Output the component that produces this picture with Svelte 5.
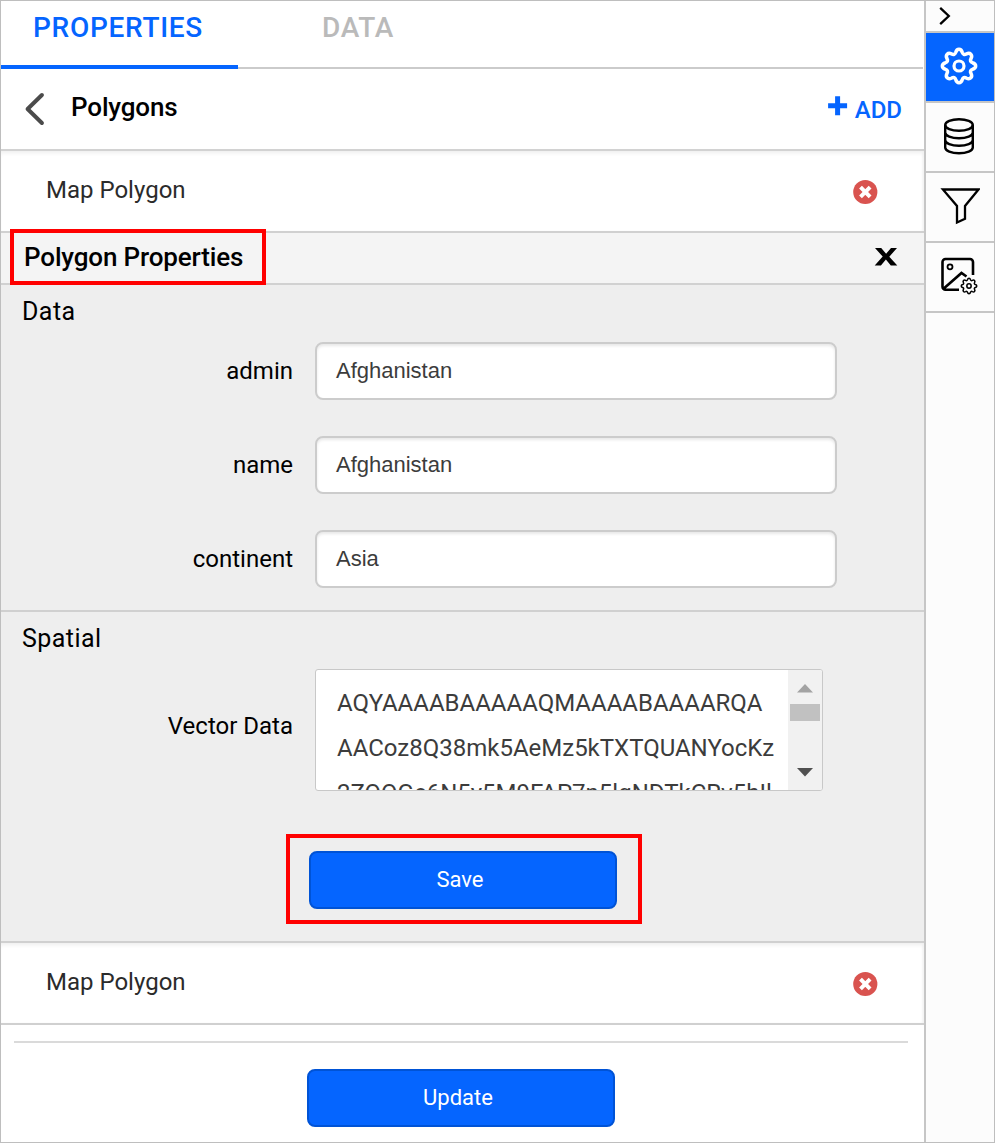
<script>
  const fields = [
    { label: 'admin', value: 'Afghanistan' },
    { label: 'name', value: 'Afghanistan' },
    { label: 'continent', value: 'Asia' }
  ];
  const vector = ['AQYAAAABAAAAAQMAAAABAAAARQA', 'AACoz8Q38mk5AeMz5kTXTQUANYocKz', '2ZQQGe6N5y5M9FAP7n5lgNDTkCRv5hIl'];
  const gear = 'M-3.2-13.1C-2-17.2 2-17.2 3.2-13.1C3.9-11.2 5.4-10.6 7-11.6C10.8-13.6 13.6-10.8 11.6-7C10.6-5.4 11.2-3.9 13.1-3.2C17.2-2 17.2 2 13.1 3.2C11.2 3.9 10.6 5.4 11.6 7C13.6 10.8 10.8 13.6 7 11.6C5.4 10.6 3.9 11.2 3.2 13.1C2 17.2-2 17.2-3.2 13.1C-3.9 11.2-5.4 10.6-7 11.6C-10.8 13.6-13.6 10.8-11.6 7C-10.6 5.4-11.2 3.9-13.1 3.2C-17.2 2-17.2-2-13.1-3.2C-11.2-3.9-10.6-5.4-11.6-7C-13.6-10.8-10.8-13.6-7-11.6C-5.4-10.6-3.9-11.2-3.2-13.1Z';
</script>

{#snippet polygonRow()}
  <div class="row">
    <span class="t24 map">Map Polygon</span>
    <svg class="remove" width="26" height="26" viewBox="0 0 26 26">
      <circle cx="13.3" cy="13" r="12.1" fill="#d9534f" />
      <path d="M8.5 8.2l9.6 9.6M18.1 8.2l-9.6 9.6" stroke="#fff" stroke-width="4" />
    </svg>
  </div>
{/snippet}

<div class="app">
  <main>
    <nav class="tabs">
      <div class="tab active"><span>PROPERTIES</span></div>
      <div class="tab"><span>DATA</span></div>
    </nav>
    <header>
      <svg class="back" width="22" height="34" viewBox="0 0 22 34" fill="none" stroke="#4b4b4b" stroke-width="4" stroke-linecap="round" stroke-linejoin="round"><path d="M17.9 3L3.6 17 17.9 31" /></svg>
      <h1>Polygons</h1>
      <div class="add">
        <svg width="20" height="20" viewBox="0 0 20 20" stroke="#0565ff" stroke-width="5"><path d="M9.6 .3v19M.1 9.8h19" /></svg>
        <span>ADD</span>
      </div>
    </header>
    {@render polygonRow()}
    <div class="heading">
      <div class="mark title"><h2>Polygon Properties</h2></div>
      <svg class="close" width="24" height="20" viewBox="0 0 24 20" fill="#000"><path d="M1 1h6.2l4.9 5.8L17 1h6l-7.7 8.7 8 8.7h-6.5l-4.9-5.8-5 5.8H.7l8-8.8z" /></svg>
    </div>
    <section class="data">
      <h3>Data</h3>
      {#each fields as f}
        <div class="field">
          <span class="t24 label">{f.label}</span>
          <div class="input">{f.value}</div>
        </div>
      {/each}
    </section>
    <section class="spatial">
      <h3>Spatial</h3>
      <div class="field vec">
        <span class="t24 label">Vector Data</span>
        <div class="area">
          <div class="lines">
            {#each vector as line}<div>{line}</div>{/each}
          </div>
          <div class="scroll">
            <svg width="18" height="9"><path d="M1 8.5L9 0 17 8.5z" fill="#a3a3a3" /></svg>
            <div class="thumb"></div>
            <svg class="down" width="18" height="9"><path d="M1 0h16L9 8.5z" fill="#505050" /></svg>
          </div>
        </div>
      </div>
      <div class="mark savebox"><div class="btn">Save</div></div>
    </section>
    {@render polygonRow()}
    <footer><div class="btn">Update</div></footer>
  </main>
  <aside>
    <div class="cell top">
      <svg width="14" height="20" viewBox="0 0 14 20" fill="none" stroke="#000" stroke-width="2.3"><path d="M2.2 1.8L10.8 10 2.2 18.2" /></svg>
    </div>
    <div class="cell on">
      <svg width="38" height="38" viewBox="-19 -19 38 38" fill="none" stroke="#fff" stroke-linejoin="round">
        <circle r="5" stroke-width="3.2" />
        <path transform="scale(1.03)" stroke-width="3.4" d={gear} />
      </svg>
    </div>
    <div class="cell">
      <svg width="32" height="38" viewBox="0 0 32 38" fill="none" stroke="#000" stroke-width="2.4">
        <ellipse cx="16" cy="8" rx="13.8" ry="5.8" />
        <path d="M2.2 8v22.500c0 3.200 6.200 5.800 13.800 5.800s13.800-2.600 13.800-5.800V8M2.200 15.500c0 3.200 6.200 5.800 13.800 5.800s13.800-2.600 13.800-5.800M2.200 23c0 3.200 6.200 5.800 13.800 5.800s13.800-2.600 13.800-5.800" />
      </svg>
    </div>
    <div class="cell">
      <svg class="funnel" width="40" height="38" viewBox="0 0 40 38" fill="none" stroke="#000" stroke-width="2.3"><path d="M2.9 2.5H38.5L25 19v12.8l-8 3.7V19z" /></svg>
    </div>
    <div class="cell">
      <svg width="38" height="38" viewBox="0 1 38 38" fill="none" stroke="#000">
        <path d="M19 33.800H5.500a3 3 0 0 1-3-3V6a3 3 0 0 1 3-3H30a3 3 0 0 1 3 3v13M3.500 32.800L21.500 17l5 3.500" stroke-width="2.600" />
        <circle cx="10" cy="10.800" r="2.500" stroke-width="1.800" />
        <g transform="translate(29 30) scale(.48)" stroke-width="3.200"><circle r="4.500" /><path d={gear} /></g>
      </svg>
    </div>
  </aside>
</div>

<style>
  :global(body) { margin: 0; background: #fff; }
  :global(*) { box-sizing: border-box; }
  .app { display: flex; width: 995px; height: 1143px; border: 1px solid #bebebe; font-family: Roboto, sans-serif; color: #000; overflow: hidden; }
  main { width: 923px; display: flex; flex-direction: column; }
  svg { display: block; flex: none; }
  h1, h2, h3 { margin: 0; font-weight: 500; font-size: 26px; line-height: 30px; letter-spacing: -.15px; }
  h3 { font-weight: 400; font-size: 25px; letter-spacing: .45px; padding-left: 21px; }
  .tabs { display: flex; height: 68px; width: 922px; background: linear-gradient(#cbcbcb, #cbcbcb) bottom / 100% 2px no-repeat; }
  .tab { width: 237px; display: flex; justify-content: center; padding: 10px 0 0 3px; font-size: 28px; line-height: 33px; font-weight: 500; color: #bababa; letter-spacing: .7px; }
  .active { color: #0565ff; border-bottom: 4px solid #0565ff; padding: 10px 3px 0 0; }
  header { height: 82px; display: flex; border-bottom: 2px solid #d2d2d2; }
  .back { margin: 23px 0 0 23px; }
  h1 { margin: 23px 0 0 25px; }
  .add { margin: 27px 22px 0 auto; display: flex; gap: 7px; color: #0565ff; font-size: 24px; line-height: 29px; font-weight: 500; }
  .row { height: 82px; display: flex; justify-content: space-between; align-items: flex-start; padding: 25px 46px 0 45px; border-bottom: 2px solid #d0d0d0; box-shadow: inset 0 4px 4px -2px #eee, inset -2px 0 2px #f5f5f5; }
  .t24 { font-size: 24px; line-height: 28px; }
  .map { color: #2b2b2b; }
  .remove { margin-top: 3px; }
  .heading { height: 52px; display: flex; justify-content: space-between; background: #f4f4f4; border-bottom: 2px solid #d1d1d1; }
  .mark { border: 4px solid #f00; position: relative; }
  .title { width: 256px; height: 56px; margin: -4px 0 0 9px; padding: 9px 0 0 10px; }
  .close { margin: 14px 26px 0 0; }
  section { background: #eee; border-bottom: 2px solid #d0d0d0; padding-top: 12px; }
  .data { height: 327px; }
  .spatial { height: 331px; }
  .field { display: flex; height: 58px; margin-bottom: 36px; align-items: center; }
  .data h3 + .field { margin-top: 15px; }
  .label { width: 292px; text-align: right; margin-right: 22px; }
  .input { width: 522px; height: 58px; border: 2px solid #ccc; border-radius: 8px; background: #fff; box-shadow: inset 0 2px 3px #e8e8e8; padding: 13px 0 0 19px; font-family: "Liberation Sans", Arial, sans-serif; font-size: 22px; line-height: 28px; color: #3c3c3c; }
  .vec { height: 122px; margin: 15px 0 43px; }
  .vec .label { margin-top: -8px; }
  .area { display: flex; width: 508px; height: 122px; border: 1px solid #c8c8c8; border-radius: 3px; background: #fff; overflow: hidden; }
  .lines { flex: 1; padding: 11px 0 0 21px; font-size: 24px; line-height: 45px; color: #3c3c3c; white-space: nowrap; }
  .scroll { width: 34px; background: #f1f1f1; display: flex; flex-direction: column; align-items: center; padding-top: 14px; }
  .thumb { width: 30px; height: 17px; background: #c1c1c1; margin-top: 11px; }
  .down { margin-top: 47px; }
  .savebox { width: 356px; height: 90px; margin-left: 285px; padding: 13px 0 0 19px; }
  .btn { width: 308px; height: 58px; border: 2px solid #0053d6; border-radius: 8px; background: #0565ff; color: #fff; text-align: center; font-size: 22px; line-height: 53px; padding-right: 6px; }
  footer { margin: 16px 16px 0 13px; border-top: 2px solid #dadada; padding: 26px 0 0 293px; }
  aside { width: 70px; border-left: 2px solid #c6c6c6; background: #fcfcfc; }
  .cell { height: 70px; border-bottom: 2px solid #c6c6c6; display: flex; justify-content: center; align-items: center; padding: 0 2px 2px 0; }
  .funnel { margin-left: 2px; }
  .cell.top { height: 32px; padding: 0 30px 0 0; }
  .on { background: #0565ff; }
</style>
